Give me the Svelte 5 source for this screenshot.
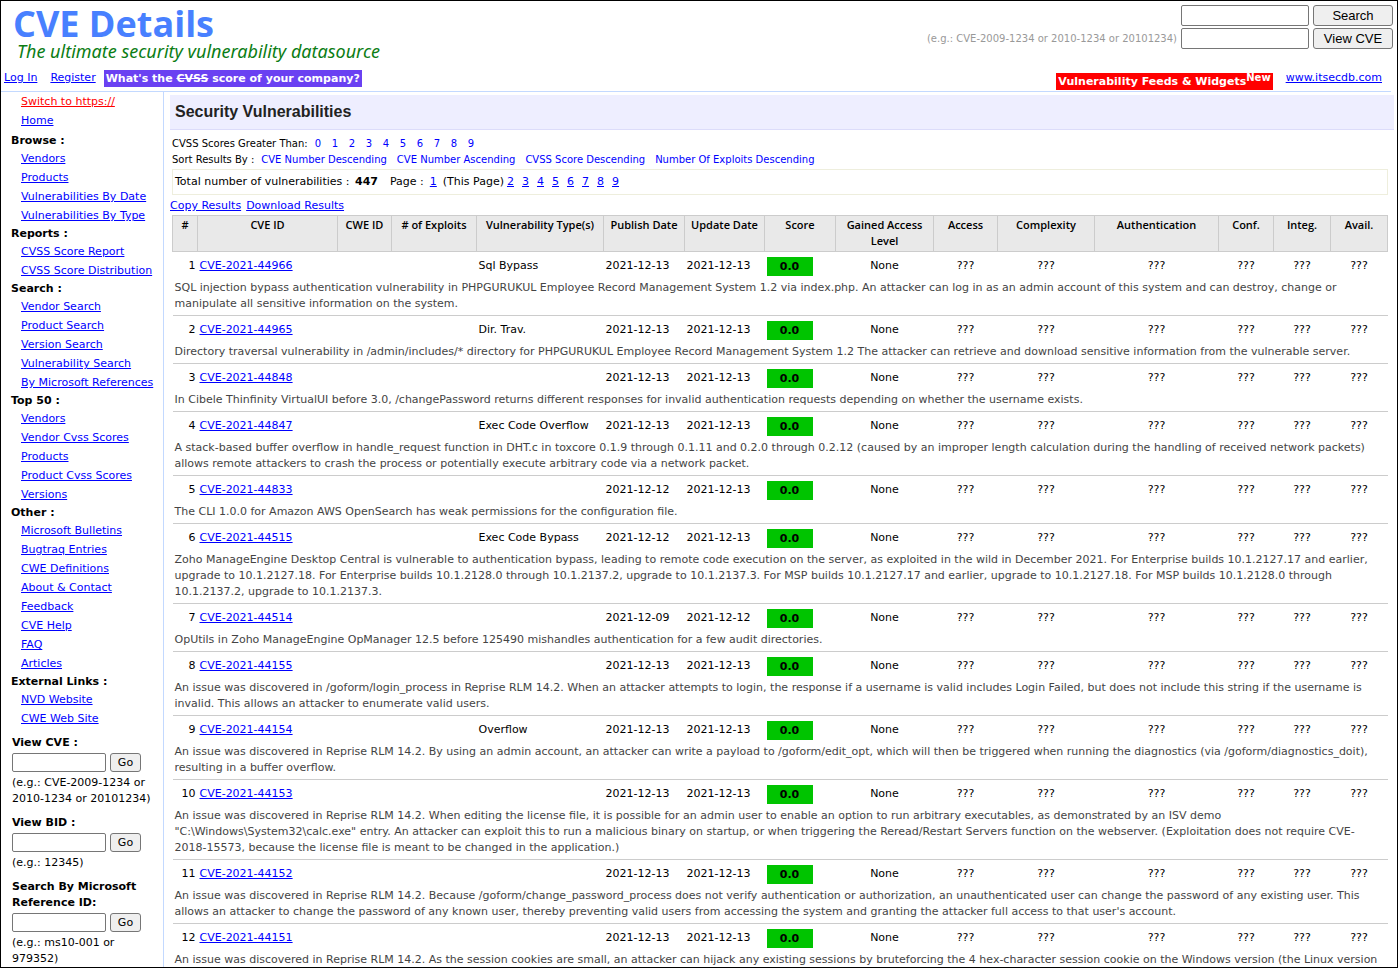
<script lang="ts">
  type Entry = {
    id: string;
    type?: string;
    published: string;
    updated: string;
    summary: string;
  };

  const menu = [
    {
      title: 'Browse :',
      links: ['Vendors', 'Products', 'Vulnerabilities By Date', 'Vulnerabilities By Type'],
    },
    { title: 'Reports :', links: ['CVSS Score Report', 'CVSS Score Distribution'] },
    {
      title: 'Search :',
      links: [
        'Vendor Search',
        'Product Search',
        'Version Search',
        'Vulnerability Search',
        'By Microsoft References',
      ],
    },
    {
      title: 'Top 50 :',
      links: ['Vendors', 'Vendor Cvss Scores', 'Products', 'Product Cvss Scores', 'Versions'],
    },
    {
      title: 'Other :',
      links: [
        'Microsoft Bulletins',
        'Bugtraq Entries',
        'CWE Definitions',
        'About & Contact',
        'Feedback',
        'CVE Help',
        'FAQ',
        'Articles',
      ],
    },
    { title: 'External Links :', links: ['NVD Website', 'CWE Web Site'] },
  ];

  const lookups = [
    { id: 'cve', label: 'View CVE :', hint: '(e.g.: CVE-2009-1234 or 2010-1234 or 20101234)' },
    { id: 'bid', label: 'View BID :', hint: '(e.g.: 12345)' },
    { id: 'ms', label: 'Search By Microsoft Reference ID:', hint: '(e.g.: ms10-001 or 979352)' },
  ];

  const minScores = [0, 1, 2, 3, 4, 5, 6, 7, 8, 9];
  const sorts = [
    'CVE Number Descending',
    'CVE Number Ascending',
    'CVSS Score Descending',
    'Number Of Exploits Descending',
  ];
  const pages = [2, 3, 4, 5, 6, 7, 8, 9];

  const columns = [
    { name: '#', width: 25 },
    { name: 'CVE ID', width: 140 },
    { name: 'CWE ID', width: 54 },
    { name: '# of Exploits', width: 85 },
    { name: 'Vulnerability Type(s)', width: 127 },
    { name: 'Publish Date', width: 81 },
    { name: 'Update Date', width: 80 },
    { name: 'Score', width: 71 },
    { name: 'Gained Access Level', width: 98 },
    { name: 'Access', width: 64 },
    { name: 'Complexity', width: 97 },
    { name: 'Authentication', width: 124 },
    { name: 'Conf.', width: 55 },
    { name: 'Integ.', width: 57 },
    { name: 'Avail.', width: 57 },
  ];
  const totalWidth = columns.reduce((sum, c) => sum + c.width, 0);

  const entries: Entry[] = [
    {
      id: 'CVE-2021-44966',
      type: 'Sql Bypass',
      published: '2021-12-13',
      updated: '2021-12-13',
      summary:
        'SQL injection bypass authentication vulnerability in PHPGURUKUL Employee Record Management System 1.2 via index.php. An attacker can log in as an admin account of this system and can destroy, change or manipulate all sensitive information on the system.',
    },
    {
      id: 'CVE-2021-44965',
      type: 'Dir. Trav.',
      published: '2021-12-13',
      updated: '2021-12-13',
      summary:
        'Directory traversal vulnerability in /admin/includes/* directory for PHPGURUKUL Employee Record Management System 1.2 The attacker can retrieve and download sensitive information from the vulnerable server.',
    },
    {
      id: 'CVE-2021-44848',
      published: '2021-12-13',
      updated: '2021-12-13',
      summary:
        'In Cibele Thinfinity VirtualUI before 3.0, /changePassword returns different responses for invalid authentication requests depending on whether the username exists.',
    },
    {
      id: 'CVE-2021-44847',
      type: 'Exec Code Overflow',
      published: '2021-12-13',
      updated: '2021-12-13',
      summary:
        'A stack-based buffer overflow in handle_request function in DHT.c in toxcore 0.1.9 through 0.1.11 and 0.2.0 through 0.2.12 (caused by an improper length calculation during the handling of received network packets) allows remote attackers to crash the process or potentially execute arbitrary code via a network packet.',
    },
    {
      id: 'CVE-2021-44833',
      published: '2021-12-12',
      updated: '2021-12-13',
      summary: 'The CLI 1.0.0 for Amazon AWS OpenSearch has weak permissions for the configuration file.',
    },
    {
      id: 'CVE-2021-44515',
      type: 'Exec Code Bypass',
      published: '2021-12-12',
      updated: '2021-12-13',
      summary:
        'Zoho ManageEngine Desktop Central is vulnerable to authentication bypass, leading to remote code execution on the server, as exploited in the wild in December 2021. For Enterprise builds 10.1.2127.17 and earlier, upgrade to 10.1.2127.18. For Enterprise builds 10.1.2128.0 through 10.1.2137.2, upgrade to 10.1.2137.3. For MSP builds 10.1.2127.17 and earlier, upgrade to 10.1.2127.18. For MSP builds 10.1.2128.0 through 10.1.2137.2, upgrade to 10.1.2137.3.',
    },
    {
      id: 'CVE-2021-44514',
      published: '2021-12-09',
      updated: '2021-12-12',
      summary:
        'OpUtils in Zoho ManageEngine OpManager 12.5 before 125490 mishandles authentication for a few audit directories.',
    },
    {
      id: 'CVE-2021-44155',
      published: '2021-12-13',
      updated: '2021-12-13',
      summary:
        'An issue was discovered in /goform/login_process in Reprise RLM 14.2. When an attacker attempts to login, the response if a username is valid includes Login Failed, but does not include this string if the username is invalid. This allows an attacker to enumerate valid users.',
    },
    {
      id: 'CVE-2021-44154',
      type: 'Overflow',
      published: '2021-12-13',
      updated: '2021-12-13',
      summary:
        'An issue was discovered in Reprise RLM 14.2. By using an admin account, an attacker can write a payload to /goform/edit_opt, which will then be triggered when running the diagnostics (via /goform/diagnostics_doit), resulting in a buffer overflow.',
    },
    {
      id: 'CVE-2021-44153',
      published: '2021-12-13',
      updated: '2021-12-13',
      summary:
        'An issue was discovered in Reprise RLM 14.2. When editing the license file, it is possible for an admin user to enable an option to run arbitrary executables, as demonstrated by an ISV demo "C:\\Windows\\System32\\calc.exe" entry. An attacker can exploit this to run a malicious binary on startup, or when triggering the Reread/Restart Servers function on the webserver. (Exploitation does not require CVE-2018-15573, because the license file is meant to be changed in the application.)',
    },
    {
      id: 'CVE-2021-44152',
      published: '2021-12-13',
      updated: '2021-12-13',
      summary:
        "An issue was discovered in Reprise RLM 14.2. Because /goform/change_password_process does not verify authentication or authorization, an unauthenticated user can change the password of any existing user. This allows an attacker to change the password of any known user, thereby preventing valid users from accessing the system and granting the attacker full access to that user's account.",
    },
    {
      id: 'CVE-2021-44151',
      published: '2021-12-13',
      updated: '2021-12-13',
      summary:
        'An issue was discovered in Reprise RLM 14.2. As the session cookies are small, an attacker can hijack any existing sessions by bruteforcing the 4 hex-character session cookie on the Windows version (the Linux version',
    },
  ];
</script>

<div class="page">
  <header class="top">
    <a class="logo" href="#home">
      <span class="logo__name">CVE Details</span>
      <span class="logo__tagline">The ultimate security vulnerability datasource</span>
    </a>
    <div class="searches">
      <form class="searches__row">
        <input type="text" aria-label="Search" />
        <button type="button">Search</button>
      </form>
      <form class="searches__row">
        <label for="top-cve">(e.g.: CVE-2009-1234 or 2010-1234 or 20101234)</label>
        <input id="top-cve" type="text" />
        <button type="button">View CVE</button>
      </form>
    </div>
  </header>

  <nav class="bar">
    <a href="#login">Log In</a>
    <a href="#register">Register</a>
    <a class="promo" href="#company">What's the <s>CVSS</s> score of your company?</a>
    <a class="feeds" href="#feeds">Vulnerability Feeds &amp; Widgets<sup>New</sup></a>
    <a class="partner" href="#itsecdb">www.itsecdb.com</a>
  </nav>

  <div class="body">
    <aside class="side">
      <nav>
        <ul class="side__first">
          <li><a class="switch" href="#https">Switch to https://</a></li>
          <li><a href="#home">Home</a></li>
        </ul>
        {#each menu as section}
          <h2>{section.title}</h2>
          <ul>
            {#each section.links as link}
              <li><a href="#menu">{link}</a></li>
            {/each}
          </ul>
        {/each}
      </nav>
      {#each lookups as lookup}
        <form class="lookup">
          <label for="side-{lookup.id}">{lookup.label}</label>
          <div class="lookup__row">
            <input id="side-{lookup.id}" type="text" />
            <button type="button">Go</button>
          </div>
          <span>{lookup.hint}</span>
        </form>
      {/each}
    </aside>

    <main>
      <h1>Security Vulnerabilities</h1>
      <div class="filters">
        <div class="filters__row scores">
          <span>CVSS Scores Greater Than:</span>
          {#each minScores as score}
            <a href="#score-{score}">{score}</a>
          {/each}
        </div>
        <div class="filters__row sorts">
          <span>Sort Results By :</span>
          {#each sorts as sort}
            <a href="#sort">{sort}</a>
          {/each}
        </div>
      </div>
      <div class="paging">
        <span class="paging__total">Total number of vulnerabilities : <b>447</b></span>
        <span class="paging__current">
          <span>Page :</span>
          <a href="#page-1">1</a>
          <span>(This Page)</span>
        </span>
        {#each pages as page}
          <a class="paging__page" href="#page-{page}">{page}</a>
        {/each}
      </div>
      <div class="actions">
        <a href="#copy">Copy Results</a>
        <a href="#download">Download Results</a>
      </div>

      <table>
        <colgroup>
          {#each columns as column}
            <col style="width: {(column.width / totalWidth) * 100}%" />
          {/each}
        </colgroup>
        <thead>
          <tr>
            {#each columns as column}
              <th scope="col">{column.name}</th>
            {/each}
          </tr>
        </thead>
        <tbody>
          {#each entries as entry, i}
            <tr class="entry">
              <td class="num">{i + 1}</td>
              <td><a href="#{entry.id}">{entry.id}</a></td>
              <td></td>
              <td></td>
              <td>{entry.type ?? ''}</td>
              <td>{entry.published}</td>
              <td>{entry.updated}</td>
              <td><div class="score">0.0</div></td>
              <td class="center">None</td>
              <td class="center">???</td>
              <td class="center">???</td>
              <td class="center">???</td>
              <td class="center">???</td>
              <td class="center">???</td>
              <td class="center">???</td>
            </tr>
            <tr class="summary">
              <td colspan={columns.length}>{entry.summary}</td>
            </tr>
          {/each}
        </tbody>
      </table>
    </main>
  </div>
</div>

<style>
  :global(body) {
    margin: 0;
    background: #fff;
  }
  .page {
    box-sizing: border-box;
    height: 100vh;
    overflow: hidden;
    border: 1px solid #000;
    color: #000;
    font-family: Verdana, 'DejaVu Sans', sans-serif;
    font-size: 11px;
    line-height: 16px;
  }
  a {
    color: #00f;
  }
  ul {
    margin: 0;
    padding: 0;
    list-style: none;
  }
  input {
    box-sizing: border-box;
    margin: 0;
    border: 1px solid #767676;
    border-radius: 2px;
    background: #fff;
  }
  button {
    box-sizing: border-box;
    margin: 0;
    padding: 0;
    border: 1px solid #767676;
    border-radius: 3px;
    background: #efefef;
    color: #000;
  }

  .top {
    display: flex;
    justify-content: space-between;
    height: 64px;
    padding: 4px 4px 0 12px;
  }
  .logo {
    display: flex;
    flex-direction: column;
    text-decoration: none;
  }
  .logo__name {
    color: #4880ff;
    font: bold 36px/38px 'Open Sans', sans-serif;
  }
  .logo__tagline {
    padding-left: 4px;
    color: #0b7d14;
    font: italic 18px/16px 'Segoe Print', 'Noto Sans', cursive;
  }
  .searches {
    display: flex;
    flex-direction: column;
    gap: 2px;
  }
  .searches__row {
    display: flex;
    align-items: center;
    justify-content: flex-end;
    gap: 4px;
  }
  .searches__row label {
    color: #999;
    font-size: 10px;
  }
  .searches__row input {
    width: 128px;
    height: 21px;
  }
  .searches__row button {
    width: 80px;
    height: 21px;
    font: 13px 'Liberation Sans', Arial, sans-serif;
  }

  .bar {
    display: flex;
    align-items: center;
    height: 18px;
    margin-right: 6px;
    padding: 0 9px 4px 3px;
    border-bottom: 1px solid #c3d9ff;
    gap: 13px;
  }
  .promo,
  .feeds {
    padding: 0 2px;
    color: #fff;
    font-weight: bold;
    line-height: 17px;
    text-decoration: none;
  }
  .promo {
    margin-left: -5px;
    background: #6a41f2;
  }
  .feeds {
    margin: 6px 0 0 auto;
    background: #f00;
  }
  .feeds sup {
    font-size: 10px;
    line-height: 0;
    vertical-align: 4px;
  }

  .body {
    display: flex;
  }
  .side {
    box-sizing: border-box;
    flex: 0 0 163px;
    border-right: 1px solid #c3d9ff;
    padding-bottom: 16px;
  }
  .side li {
    padding-left: 20px;
    line-height: 19px;
    white-space: nowrap;
  }
  .side__first {
    padding-bottom: 2px;
  }
  .side .switch {
    color: #f00;
  }
  .side h2 {
    margin: 0;
    padding-left: 10px;
    font-size: 11px;
    line-height: 17px;
  }
  .lookup {
    display: flex;
    flex-direction: column;
    margin: 7px 4px 8px 11px;
  }
  .lookup label {
    font-weight: bold;
  }
  .lookup__row {
    display: flex;
    margin: 2px 0 3px;
    gap: 4px;
  }
  .lookup__row input {
    width: 94px;
    height: 19px;
  }
  .lookup__row button {
    width: 31px;
    height: 19px;
    font: inherit;
  }

  main {
    flex: 1;
    min-width: 0;
    padding: 3px 3px 0 6px;
  }
  h1 {
    margin: 0;
    padding: 0 5px;
    border-bottom: 1px solid #dcdcfa;
    background: #eeeeff;
    color: #222;
    font: bold 16px/34px 'Liberation Sans', Arial, sans-serif;
  }
  .filters {
    padding: 6px 2px 0;
    font-size: 10px;
  }
  .filters__row {
    display: flex;
  }
  .filters a {
    text-decoration: none;
  }
  .scores a {
    width: 17px;
  }
  .scores span {
    margin-right: 7px;
  }
  .sorts {
    gap: 10px;
  }
  .sorts span {
    margin-right: -3px;
  }
  .paging {
    display: flex;
    margin: 1px 6px 0 2px;
    padding: 4px 2px;
    border: 1px solid #eeeedd;
  }
  .paging__total {
    margin-right: 12px;
  }
  .paging__total b {
    margin-left: 2px;
  }
  .paging__current {
    display: flex;
    margin-right: 3px;
    gap: 6px;
  }
  .paging__page {
    margin-right: 8px;
  }
  .actions {
    display: flex;
    margin: 3px 0 1px;
    gap: 5px;
  }

  table {
    width: calc(100% - 8px);
    margin-left: 2px;
    border-collapse: collapse;
    table-layout: fixed;
  }
  th {
    height: 32px;
    padding: 1px 2px 2px;
    border: 1px solid #ccc;
    background: #e9e9e9;
    font: 600 11px/16px 'Open Sans', sans-serif;
    vertical-align: top;
  }
  td {
    padding: 0 2px;
  }
  .entry td {
    height: 28px;
    line-height: 16px;
    white-space: nowrap;
  }
  .num {
    text-align: right;
  }
  .center {
    text-align: center;
  }
  .score {
    width: 46px;
    background: #00c400;
    font-weight: bold;
    line-height: 19px;
    text-align: center;
  }
  .summary {
    border-bottom: 1px solid #ccc;
    color: #444;
  }
  .summary td {
    padding-bottom: 3px;
  }
</style>
